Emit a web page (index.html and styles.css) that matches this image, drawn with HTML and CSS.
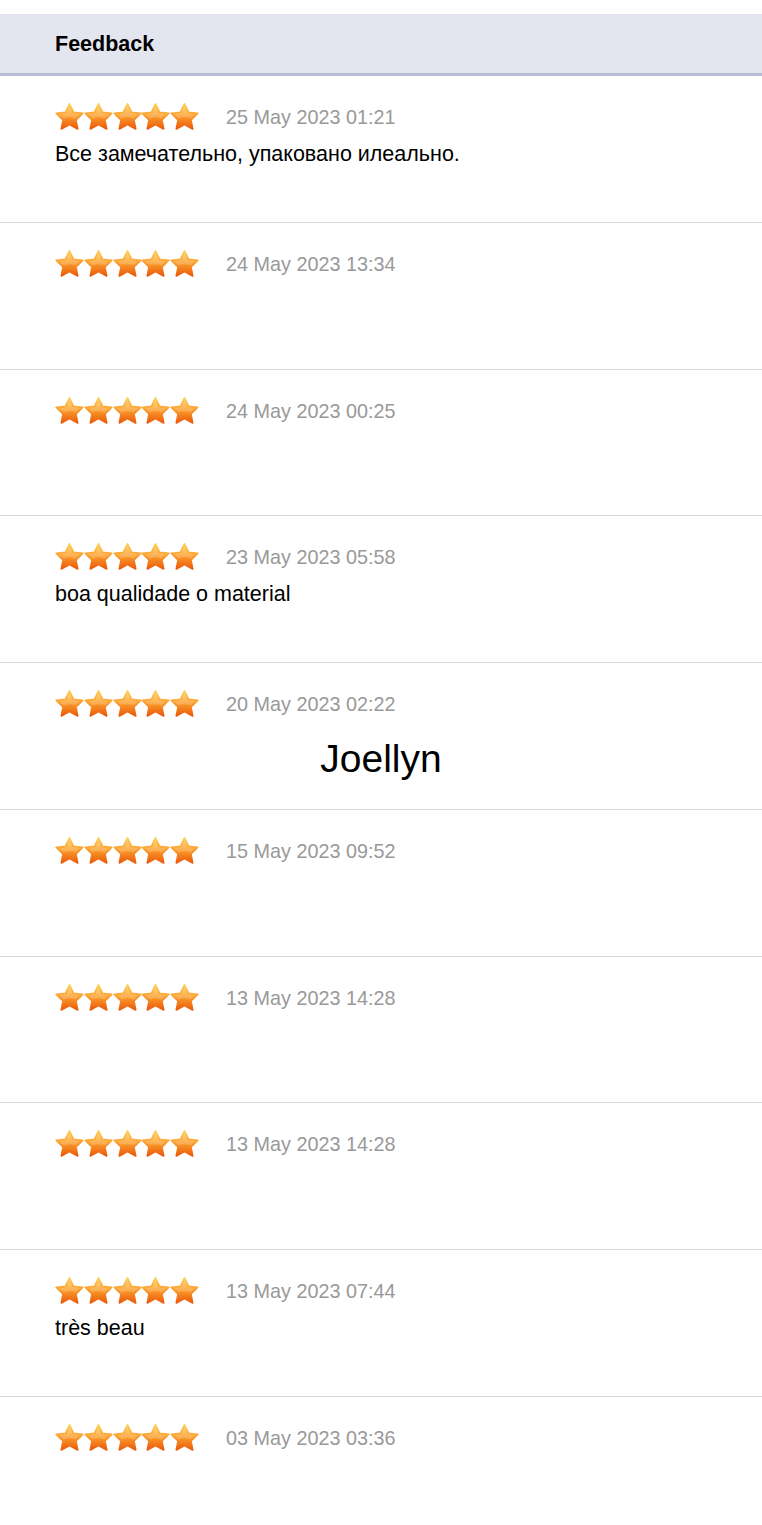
FILE: index.html
```html
<!DOCTYPE html>
<html lang="en">
<head>
  <meta charset="UTF-8" />
  <meta name="viewport" content="width=device-width, initial-scale=1.0" />
  <title>Feedback</title>
  <link rel="stylesheet" href="styles.css">
</head>
<body>

  <svg width="0" height="0" style="position:absolute">
    <defs>
      <linearGradient id="starFill" x1="0" y1="0" x2="0" y2="1">
        <stop offset="0" stop-color="#ffd15a" />
        <stop offset="0.45" stop-color="#fca02c" />
        <stop offset="1" stop-color="#eb5a0c" />
      </linearGradient>
      <symbol id="star" viewBox="0 0 24 24">
        <path d="M12 1.5L15.29 8.47 22.94 9.45 17.33 14.73 18.76 22.3 12 18.6 5.24 22.3 6.67 14.73 1.06 9.45 8.71 8.47z"
              fill="url(#starFill)" stroke="url(#starFill)" stroke-width="1.4" stroke-linejoin="round" />
        <path d="M12 3.2L14.6 9.2 21 10 16.8 13.6C14 12.4 10 12.4 7.2 13.6L3 10 9.4 9.2z" fill="#fff" opacity="0.2" />
      </symbol>
    </defs>
  </svg>

  <div class="header">Feedback</div>

  <div id="feedback-list"></div>

  <script>
    const feedback = [
      { date: "25 May 2023 01:21", text: "Все замечательно, упаковано илеально." },
      { date: "24 May 2023 13:34", text: "" },
      { date: "24 May 2023 00:25", text: "" },
      { date: "23 May 2023 05:58", text: "boa qualidade o material" },
      { date: "20 May 2023 02:22", text: "Joellyn", sign: true },
      { date: "15 May 2023 09:52", text: "" },
      { date: "13 May 2023 14:28", text: "" },
      { date: "13 May 2023 14:28", text: "" },
      { date: "13 May 2023 07:44", text: "très beau" },
      { date: "03 May 2023 03:36", text: "" }
    ];

    const list = document.getElementById('feedback-list');
    const star = '<svg class="star"><use href="#star"/></svg>';

    feedback.forEach(item => {
      const row = document.createElement('div');
      row.className = 'feedback-row';
      let comment = '';
      if (item.sign) {
        comment = `<div class="signature">${item.text}</div>`;
      } else if (item.text) {
        comment = `<div class="comment">${item.text}</div>`;
      }
      row.innerHTML = `
        <div class="row-head">
          <div class="stars">${star.repeat(5)}</div>
          <span class="date">${item.date}</span>
        </div>
        ${comment}
      `;
      list.appendChild(row);
    });
  </script>
</body>
</html>
```

FILE: styles.css
```css
body {
  margin: 0;
  padding-top: 14px;
  font-family: "Liberation Sans", Arial, sans-serif;
  background: #fff;
  color: #000;
}

.header {
  height: 58px;
  line-height: 58px;
  padding: 1px 0 0 55px;
  font-size: 21.5px;
  font-weight: bold;
  background: #e4e6ef;
  border-bottom: 3px solid #b9bdd3;
}

.feedback-row {
  box-sizing: border-box;
  height: 146.75px;
  padding: 26px 0 0 55px;
  border-bottom: 1px solid #d8d8d8;
}

.feedback-row:last-child {
  border-bottom: none;
}

.row-head {
  display: flex;
  align-items: center;
  gap: 27px;
  height: 29px;
}

.stars {
  display: flex;
}

.star {
  width: 29px;
  height: 29px;
  margin-right: -0.2px;
}

.date {
  margin-top: 2px;
  font-size: 19.8px;
  color: #999;
}

.comment {
  margin-top: 11px;
  font-size: 21.5px;
  line-height: 24px;
}

.signature {
  margin-left: -55px;
  margin-top: 19px;
  text-align: center;
  font-size: 39px;
  line-height: 44px;
}
```
